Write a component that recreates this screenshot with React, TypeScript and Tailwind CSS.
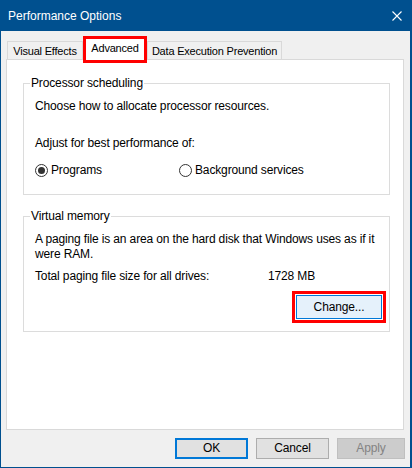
export default function App() {
  return (
    <div className="w-[412px] h-[468px] flex flex-col border border-r-2 border-[#00508f] bg-[#f0f0f0] font-['Liberation_Sans',Arial,sans-serif] text-[12px] leading-[15px] tracking-[-0.14px] text-black">
      {/* title bar */}
      <div className="h-[30px] shrink-0 flex items-center justify-between bg-[#00508f] pl-[7px] pr-[8px] text-white tracking-normal">
        <span>Performance Options</span>
        <svg width="10" height="10" viewBox="0 0 10 10">
          <path d="M0.5 0.5 L9.5 9.5 M9.5 0.5 L0.5 9.5" stroke="#fff" strokeWidth="1.1" fill="none" />
        </svg>
      </div>

      {/* tabs */}
      <div className="h-[24px] mt-[5px] flex items-end pl-[6px]">
        <div className="h-[19px] w-[76px] border border-b-0 border-[#d9d9d9] bg-[#f0f0f0] flex items-center justify-center text-[11px] tracking-[-0.2px]">
          Visual Effects
        </div>
        <div className="relative z-10 h-[21px] w-[58px] mx-[3px] bg-white outline-[3px] outline-solid outline-[#ff0000] flex items-center justify-center pb-[3px] text-[11px] tracking-[-0.2px]">
          Advanced
        </div>
        <div className="h-[19px] w-[135px] border border-b-0 border-[#d9d9d9] bg-[#f0f0f0] flex items-center justify-center text-[11px] tracking-[-0.2px]">
          Data Execution Prevention
        </div>
      </div>

      {/* panel */}
      <div className="-mt-px ml-[5px] w-[398px] h-[371px] shrink-0 border border-[#d9d9d9] bg-white">
        <fieldset className="mt-[16px] ml-[16px] w-[367px] border border-[#dcdcdc]">
          <legend className="ml-[6px] px-[1px]">Processor scheduling</legend>
          <div className="pl-[11px] pr-[7px] pt-[8px] pb-[16px]">
            <div>Choose how to allocate processor resources.</div>
            <div className="mt-[22px]">Adjust for best performance of:</div>
            <div className="mt-[12px] flex items-center">
              <div className="w-[144px] flex items-center gap-[3px]">
                <span className="w-[13px] h-[13px] rounded-full border border-[#333333] bg-white flex items-center justify-center">
                  <span className="w-[7px] h-[7px] rounded-full bg-[#333333]" />
                </span>
                <span>Programs</span>
              </div>
              <div className="flex items-center gap-[3px]">
                <span className="w-[13px] h-[13px] rounded-full border border-[#333333] bg-white" />
                <span>Background services</span>
              </div>
            </div>
          </div>
        </fieldset>

        <fieldset className="mt-[14px] ml-[16px] w-[367px] border border-[#dcdcdc]">
          <legend className="ml-[6px] px-[1px]">Virtual memory</legend>
          <div className="pl-[11px] pr-[7px] pt-[8px] pb-[12px]">
            <div className="whitespace-nowrap">
              A paging file is an area on the hard disk that Windows uses as if it
              <br />
              were RAM.
            </div>
            <div className="mt-[7px] flex whitespace-nowrap">
              <span className="w-[233px]">Total paging file size for all drives:</span>
              <span>1728 MB</span>
            </div>
            <div className="mt-[11px] flex justify-end">
              <button className="w-[86px] h-[24px] border border-[#0078d7] bg-[#e5f1fb] outline-[3px] outline-solid outline-offset-[1px] outline-[#ff0000]">
                Change...
              </button>
            </div>
          </div>
        </fieldset>
      </div>

      {/* buttons */}
      <div className="mt-[8px] flex justify-end gap-[8px] pr-[5px]">
        <button className="w-[73px] h-[21px] border-2 border-[#0078d7] bg-[#e1e1e1]">OK</button>
        <button className="w-[73px] h-[21px] border border-[#adadad] bg-[#e1e1e1]">Cancel</button>
        <button className="w-[68px] h-[21px] border border-[#bfbfbf] bg-[#cccccc] text-[#838383]">Apply</button>
      </div>
    </div>
  )
}
